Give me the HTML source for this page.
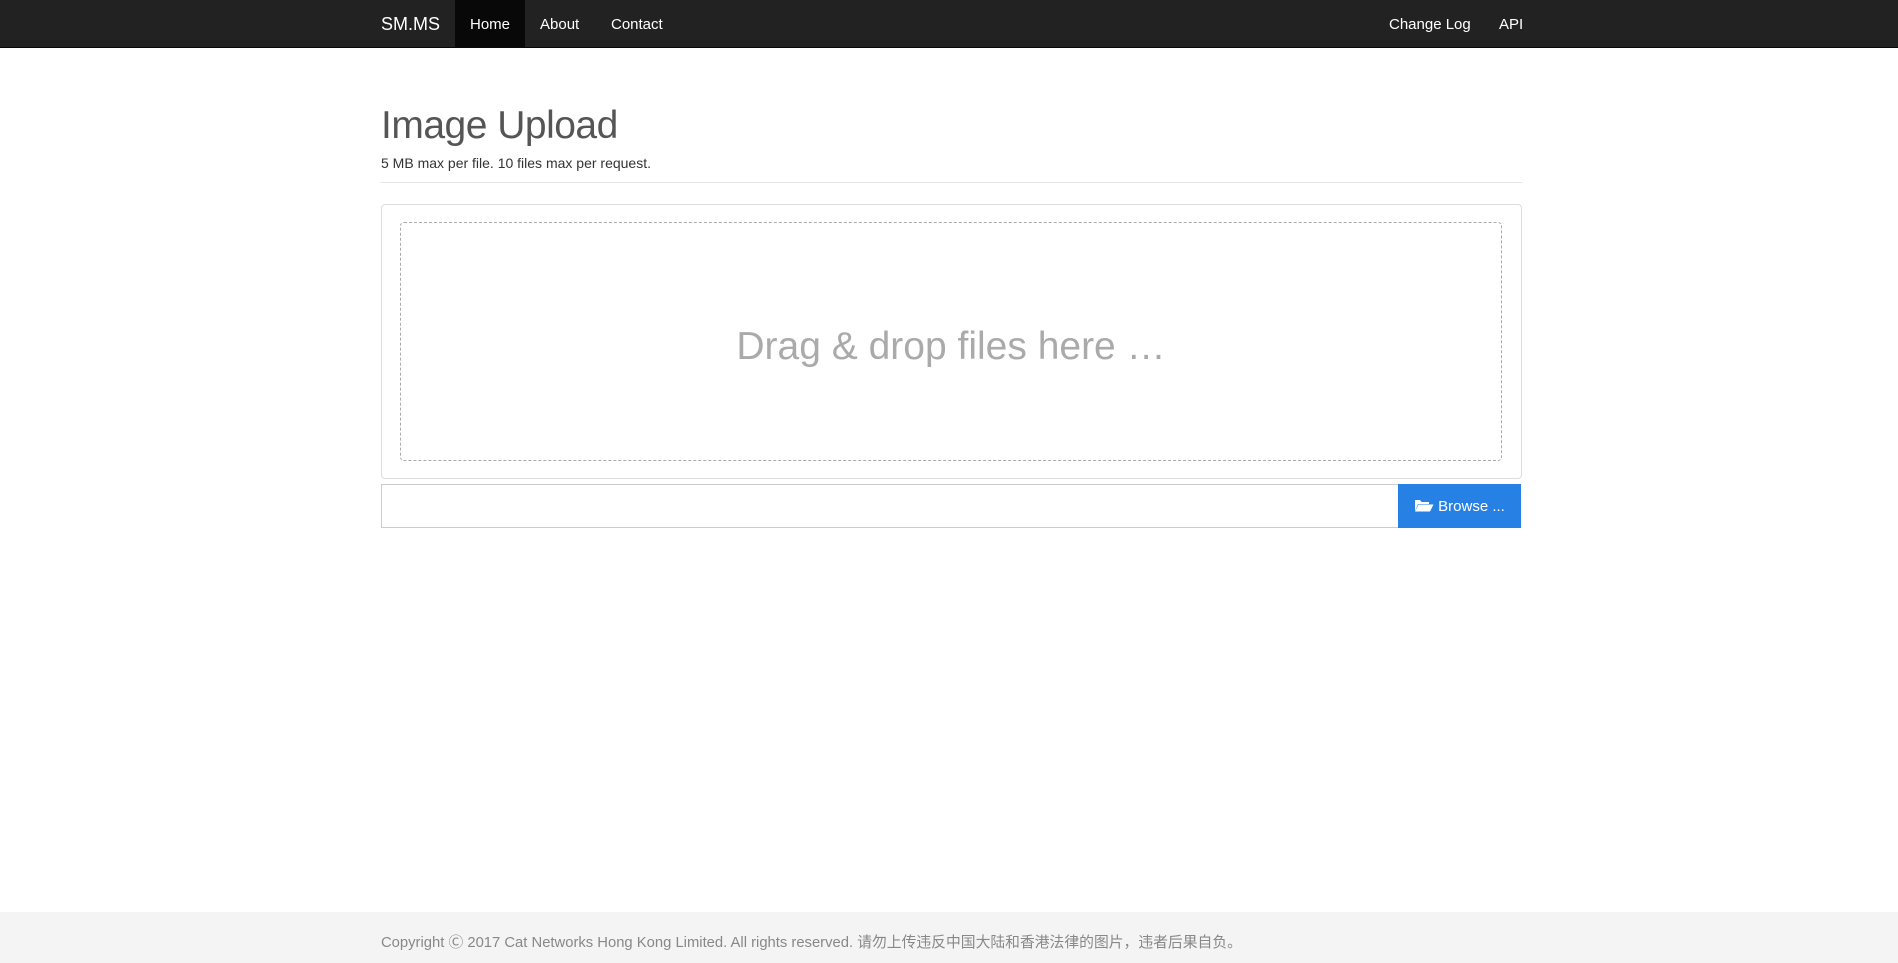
<!DOCTYPE html>
<html><head><meta charset="utf-8"><style>
*{box-sizing:border-box;margin:0;padding:0}
html,body{width:1898px;height:963px;overflow:hidden;background:#fff;font-family:"Liberation Sans","Noto Sans CJK SC",sans-serif;position:relative}
.nav{position:absolute;left:0;top:0;width:1898px;height:48px;background:#222;border-bottom:1px solid #080808}
.nav span{position:absolute;top:0;height:47px;line-height:49px;color:#fff;font-size:15px}
.home{background:#080808}
h1{position:absolute;left:381px;top:104px;font-size:39px;font-weight:normal;color:#555;letter-spacing:-0.5px}
.sub{position:absolute;left:381px;top:155px;font-size:14px;color:#333}
.hr{position:absolute;left:381px;top:182px;width:1141px;height:1px;background:#e5e5e5}
.panel{position:absolute;left:381px;top:204px;width:1141px;height:275px;border:1px solid #ddd;border-radius:4px}
.drop{position:absolute;left:400px;top:222px;width:1102px;height:239px;border:1px dashed #aaa;border-radius:4px;text-align:center;line-height:247px;font-size:39px;color:#aaa}
.inp{position:absolute;left:381px;top:484px;width:1018px;height:44px;border:1px solid #ccc;border-right:none}
.btn{position:absolute;left:1398px;top:484px;width:123px;height:44px;background:#2780e3;color:#fff;font-size:15px;line-height:46px;text-align:center}
.foot{position:absolute;left:0;top:912px;width:1898px;height:51px;background:#f4f4f4}
.foot div{position:absolute;left:381px;top:19px;font-size:14.8px;color:#888;white-space:nowrap}
</style></head><body>
<div class="nav">
<span style="left:381px;font-size:18px">SM.MS</span>
<span class="home" style="left:455px;width:70px;text-align:center">Home</span>
<span style="left:540px">About</span>
<span style="left:611px">Contact</span>
<span style="left:1389px">Change Log</span>
<span style="left:1499px">API</span>
</div>
<h1>Image Upload</h1>
<div class="sub">5 MB max per file. 10 files max per request.</div>
<div class="hr"></div>
<div class="panel"></div>
<div class="drop">Drag &amp; drop files here …</div>
<div class="inp"></div>
<div class="btn"><svg width="20" height="14" viewBox="0 0 20 14" style="vertical-align:-1px;margin-right:4px"><path d="M1 2h5l1.5 2H15v2H4L1 13z" fill="#fff"/><path d="M4.5 6.5H19.5L16 13.5H1z" fill="#fff"/></svg>Browse ...</div>
<div class="foot"><div>Copyright Ⓒ 2017 Cat Networks Hong Kong Limited. All rights reserved. 请勿上传违反中国大陆和香港法律的图片，违者后果自负。</div></div>
</body></html>
